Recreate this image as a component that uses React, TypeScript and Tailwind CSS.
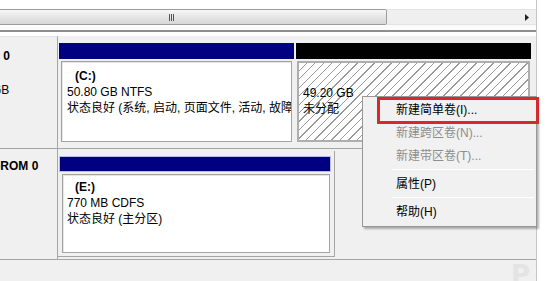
import React from 'react';

type MenuEntry = { label?: string; disabled?: boolean; sep?: boolean };

const menu: MenuEntry[] = [
  { label: '新建简单卷(I)...' },
  { label: '新建跨区卷(N)...', disabled: true },
  { label: '新建带区卷(T)...', disabled: true },
  { sep: true },
  { label: '属性(P)' },
  { sep: true },
  { label: '帮助(H)' },
];

const ScrollBar = () => (
  <div className="h-[16px] flex bg-[#f0f0f0]">
    <div className="w-[387px] h-full bg-gradient-to-b from-[#f7f7f7] via-[#e6e6e6] to-[#d6d6d6] border border-l-0 border-[#9c9c9c] rounded-r-[2px] flex items-center">
      <div className="ml-[169px] flex gap-[1px]">
        <div className="w-[1px] h-[7px] bg-[#555]" />
        <div className="w-[1px] h-[7px] bg-[#555]" />
        <div className="w-[1px] h-[7px] bg-[#555]" />
      </div>
    </div>
    <div className="flex-1 bg-[#efefef] border-y border-[#e3e3e3]" />
    <div className="w-[18px] flex items-center justify-center bg-[#efefef] border-y border-[#e3e3e3]">
      <svg width="4" height="7" viewBox="0 0 4 7">
        <path d="M0 0 L4 3.5 L0 7 Z" fill="#222" />
      </svg>
    </div>
  </div>
);

const App: React.FC = () => {
  return (
    <div className="relative w-[546px] h-[281px] overflow-hidden bg-white text-black text-[12px] leading-[16px] font-['Liberation_Sans','Noto_Sans_CJK_SC',sans-serif]">
      <div className="flex h-full">
        <div className="w-[537px] h-full flex flex-col border-r border-[#c6c6c6]">
          <div className="h-[9px] bg-white" />
          <ScrollBar />
          <div className="h-[5px] bg-[#fbfbfb]" />
          <div className="h-[2px] bg-[#8e8e8e]" />
          <div className="h-[4px] bg-white" />

          <div className="flex-1 flex flex-col bg-[#f0f0f0]">
            {/* Disk 0 */}
            <div className="h-[113px] flex border-b border-[#a5a5a5]">
              <div className="w-[58px] shrink-0 overflow-hidden border-r border-[#a5a5a5] border-t border-t-[#e2e2e2] pt-[11px] whitespace-nowrap">
                <div className="ml-[-24px] font-bold leading-[17px]">磁盘 0</div>
                <div className="h-[17px]" />
                <div className="ml-[-48px] leading-[17px]">100.00 GB</div>
              </div>
              <div className="flex-1 flex pt-[7px] pl-[1px] gap-[2px]">
                <div className="w-[235px] flex flex-col">
                  <div className="h-[16px] bg-[#000080]" />
                  <div className="mt-[2px] mx-[2px] h-[81px] overflow-hidden whitespace-nowrap bg-white border border-[#a3a3a3] shadow-[inset_1px_1px_0_#e6e6e6] pl-[5px] pt-[6px]">
                    <div className="pl-[8px] font-bold">(C:)</div>
                    <div>50.80 GB NTFS</div>
                    <div>状态良好 (系统, 启动, 页面文件, 活动, 故障</div>
                  </div>
                </div>
                <div className="w-[235px] flex flex-col">
                  <div className="h-[16px] bg-black" />
                  <div className="mt-[2px] mx-[1px] h-[81px] overflow-hidden whitespace-nowrap border-2 border-[#aeaeae] bg-[repeating-linear-gradient(135deg,#ffffff_0px,#ffffff_5px,#9a9a9a_5px,#9a9a9a_6px)] pl-[4px] pt-[6px]">
                    <div className="h-[16px]" />
                    <div>49.20 GB</div>
                    <div>未分配</div>
                  </div>
                </div>
              </div>
            </div>

            {/* CD-ROM 0 */}
            <div className="h-[111px] flex border-b border-[#a5a5a5]">
              <div className="w-[58px] shrink-0 overflow-hidden border-r border-[#a5a5a5] pt-[9px] whitespace-nowrap">
                <div className="ml-[-21px] font-bold leading-[17px]">CD-ROM 0</div>
              </div>
              <div className="flex-1 pt-[2px]">
                <div className="w-[277px] h-[106px] border-r border-b border-[#a5a5a5] pt-[5px] pl-[1px]">
                  <div className="w-[272px] h-[16px] bg-[#000080] border border-[#b8bde8]" />
                  <div className="mt-[2px] ml-[3px] w-[268px] h-[79px] overflow-hidden whitespace-nowrap bg-white border border-[#a3a3a3] shadow-[inset_1px_1px_0_#e6e6e6] pl-[4px] pt-[4px]">
                    <div className="pl-[8px] font-bold">(E:)</div>
                    <div>770 MB CDFS</div>
                    <div>状态良好 (主分区)</div>
                  </div>
                </div>
              </div>
            </div>
            <div className="flex-1" />
          </div>
        </div>
        <div className="flex-1 bg-white" />
      </div>

      {/* context menu */}
      <div className="absolute left-[362px] top-[96px] w-[175px] bg-[#f1f1f1] border border-[#979797] shadow-[2px_2px_2px_rgba(0,0,0,0.3)] pt-[1px] pb-[3px] whitespace-nowrap">
        {menu.map((m, i) =>
          m.sep ? (
            <div key={i} className="h-[5px] flex items-center pl-[29px] pr-[2px]">
              <div className="w-full h-[1px] bg-[#d7d7d7] border-b border-white" />
            </div>
          ) : (
            <div
              key={i}
              className={`h-[23px] flex items-center pl-[33px] ${m.disabled ? 'text-[#8d8d8d]' : 'text-black'}`}
            >
              {m.label}
            </div>
          )
        )}
      </div>
      <div className="absolute left-[377px] top-[97px] w-[162px] h-[27px] border-[3px] border-[#d42a2f]" />

      <div className="absolute left-[511px] top-[262px] text-[26px] leading-[26px] font-bold text-[#e4e4e4] font-['DejaVu_Sans',sans-serif]">P</div>
    </div>
  );
};

export default App;
